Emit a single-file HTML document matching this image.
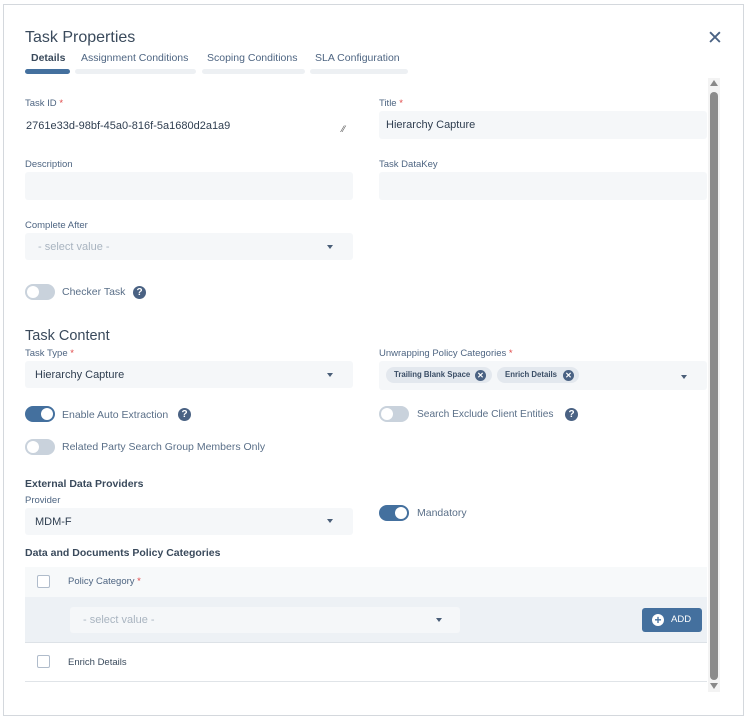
<!DOCTYPE html>
<html><head><style>
*{box-sizing:border-box;margin:0;padding:0}
body{width:747px;height:718px;background:#fff;font-family:"Liberation Sans",sans-serif;position:relative;overflow:hidden;color:#4a5b6e}
.frame{position:absolute;left:3px;top:4px;width:741px;height:712px;border:1px solid #d4d8dd;background:#fff}
.a{position:absolute}
.lbl{font-size:9.5px;color:#4e6582}
.req{color:#e04848}
.inp{position:absolute;background:#f5f7f9;border-radius:3px;font-size:11px;color:#2f3e50;padding-left:10px;display:flex;align-items:center}
.caret{position:absolute;width:0;height:0;border-left:3.5px solid transparent;border-right:3.5px solid transparent;border-top:4px solid #4a5e78}
.tog{position:absolute;width:30px;height:16px;border-radius:8px;background:#c9d2dc}
.tog::after{content:"";position:absolute;top:2px;left:2px;width:12px;height:12px;border-radius:50%;background:#fff}
.tog.on{background:#44709e}.tog.on::after{left:16px}
.tl{position:absolute;font-size:10.5px;color:#5a6f88}
.q{position:absolute;width:13px;height:13px;border-radius:50%;background:#4a6283;color:#fff;font-size:10px;font-weight:bold;text-align:center;line-height:13px}
.chip{position:absolute;height:16px;border-radius:8px;background:#e3e8ee;font-size:7.8px;font-weight:bold;color:#3b4e66;padding-left:8px;line-height:16px;white-space:nowrap}
.x{position:absolute;width:11px;height:11px;border-radius:50%;background:#4a6283;color:#fff;font-size:8px;text-align:center;line-height:11px;top:2.5px}
.cb{position:absolute;width:13px;height:13px;border:1.5px solid #b0bccb;border-radius:2px;background:#fff}
</style></head><body>
<div class="frame"></div>
<div class="a" style="left:25px;top:29px;font-size:16px;color:#3a4a5c">Task Properties</div>
<div class="a" style="left:707px;top:27px;font-size:19px;color:#4a6283">✕</div>
<div class="a" style="left:31px;top:52px;font-size:10.5px;font-weight:bold;color:#3a4a5c">Details</div>
<div class="a" style="left:81px;top:52px;font-size:10.5px;color:#4e6582">Assignment Conditions</div>
<div class="a" style="left:207px;top:52px;font-size:10.5px;color:#4e6582">Scoping Conditions</div>
<div class="a" style="left:315px;top:52px;font-size:10.5px;color:#4e6582">SLA Configuration</div>
<div class="a" style="left:25px;top:69px;width:45px;height:5px;border-radius:3px;background:#44709e"></div>
<div class="a" style="left:75px;top:69px;width:121px;height:5px;border-radius:3px;background:#edf0f3"></div>
<div class="a" style="left:202px;top:69px;width:103px;height:5px;border-radius:3px;background:#edf0f3"></div>
<div class="a" style="left:310px;top:69px;width:98px;height:5px;border-radius:3px;background:#edf0f3"></div>

<div class="a lbl" style="left:25px;top:98px">Task ID <span class="req">*</span></div>
<div class="a" style="left:26px;top:120px;font-size:11px;color:#2f3e50">2761e33d-98bf-45a0-816f-5a1680d2a1a9</div>
<div class="a" style="left:342px;top:124px;font-size:9px;color:#555">⁄⁄</div>
<div class="a lbl" style="left:379px;top:98px">Title <span class="req">*</span></div>
<div class="inp" style="left:379px;top:111px;width:328px;height:28px;padding-left:7px">Hierarchy Capture</div>

<div class="a lbl" style="left:25px;top:159px">Description</div>
<div class="inp" style="left:25px;top:172px;width:328px;height:28px"></div>
<div class="a lbl" style="left:379px;top:159px">Task DataKey</div>
<div class="inp" style="left:379px;top:172px;width:328px;height:28px"></div>

<div class="a lbl" style="left:25px;top:220px">Complete After</div>
<div class="inp" style="left:25px;top:233px;width:328px;height:27px;color:#a9b4c0;padding-left:13px">- select value -</div>
<div class="caret" style="left:327px;top:245px"></div>

<div class="tog" style="left:25px;top:284px"></div>
<div class="tl" style="left:62px;top:286px">Checker Task</div>
<div class="q" style="left:133px;top:286px">?</div>

<div class="a" style="left:25px;top:328px;font-size:14.5px;color:#3a4a5c">Task Content</div>
<div class="a lbl" style="left:25px;top:348px">Task Type <span class="req">*</span></div>
<div class="inp" style="left:25px;top:361px;width:328px;height:27px">Hierarchy Capture</div>
<div class="caret" style="left:327px;top:373px"></div>
<div class="a lbl" style="left:379px;top:348px">Unwrapping Policy Categories <span class="req">*</span></div>
<div class="inp" style="left:379px;top:361px;width:328px;height:29px"></div>
<div class="chip" style="left:386px;top:367px;width:106px">Trailing Blank Space<div class="x" style="left:89px">✕</div></div>
<div class="chip" style="left:497px;top:367px;width:82px">Enrich Details<div class="x" style="left:66px">✕</div></div>
<div class="caret" style="left:681px;top:375px"></div>

<div class="tog on" style="left:25px;top:406px"></div>
<div class="tl" style="left:62px;top:409px">Enable Auto Extraction</div>
<div class="q" style="left:178px;top:408px">?</div>
<div class="tog" style="left:379px;top:406px"></div>
<div class="tl" style="left:417px;top:409px;font-size:10.2px">Search Exclude Client Entities</div>
<div class="q" style="left:565px;top:408px">?</div>
<div class="tog" style="left:25px;top:439px"></div>
<div class="tl" style="left:62px;top:441px">Related Party Search Group Members Only</div>

<div class="a" style="left:25px;top:478px;font-size:10.5px;font-weight:bold;color:#3a4a5c">External Data Providers</div>
<div class="a lbl" style="left:25px;top:495px">Provider</div>
<div class="inp" style="left:25px;top:508px;width:328px;height:27px">MDM-F</div>
<div class="caret" style="left:327px;top:519px"></div>
<div class="tog on" style="left:379px;top:505px"></div>
<div class="tl" style="left:417px;top:507px">Mandatory</div>

<div class="a" style="left:25px;top:547px;font-size:10.5px;font-weight:bold;color:#3a4a5c">Data and Documents Policy Categories</div>
<div class="a" style="left:25px;top:567px;width:682px;height:30px;background:#f7f9fa"></div>
<div class="cb" style="left:37px;top:575px"></div>
<div class="a lbl" style="left:68px;top:576px">Policy Category <span class="req">*</span></div>
<div class="a" style="left:25px;top:597px;width:682px;height:46px;background:#edf1f5;border-bottom:1px solid #dde2e7"></div>
<div class="inp" style="left:70px;top:607px;width:390px;height:26px;color:#a9b4c0;padding-left:13px">- select value -</div>
<div class="caret" style="left:436px;top:618px"></div>
<div class="a" style="left:642px;top:608px;width:60px;height:24px;background:#44709e;border-radius:3px;color:#fff;font-size:9.5px;line-height:24px;padding-left:29px">ADD</div>
<div class="a" style="left:652px;top:614px;width:12px;height:12px;border-radius:50%;background:#fff;color:#44709e;font-size:12px;font-weight:bold;line-height:12px;text-align:center">+</div>
<div class="cb" style="left:37px;top:655px"></div>
<div class="a lbl" style="left:68px;top:657px;color:#3a4a5c">Enrich Details</div>
<div class="a" style="left:25px;top:681px;width:682px;height:1px;background:#e0e4e8"></div>

<div class="a" style="left:708px;top:78px;width:12px;height:614px;background:#f3f3f3"></div>
<div class="a" style="left:710px;top:80px;border-left:4px solid transparent;border-right:4px solid transparent;border-bottom:6px solid #888"></div>
<div class="a" style="left:710px;top:92px;width:8px;height:588px;border-radius:4px;background:#8b8b8b"></div>
<div class="a" style="left:710px;top:683px;border-left:4px solid transparent;border-right:4px solid transparent;border-top:6px solid #888"></div>
</body></html>
